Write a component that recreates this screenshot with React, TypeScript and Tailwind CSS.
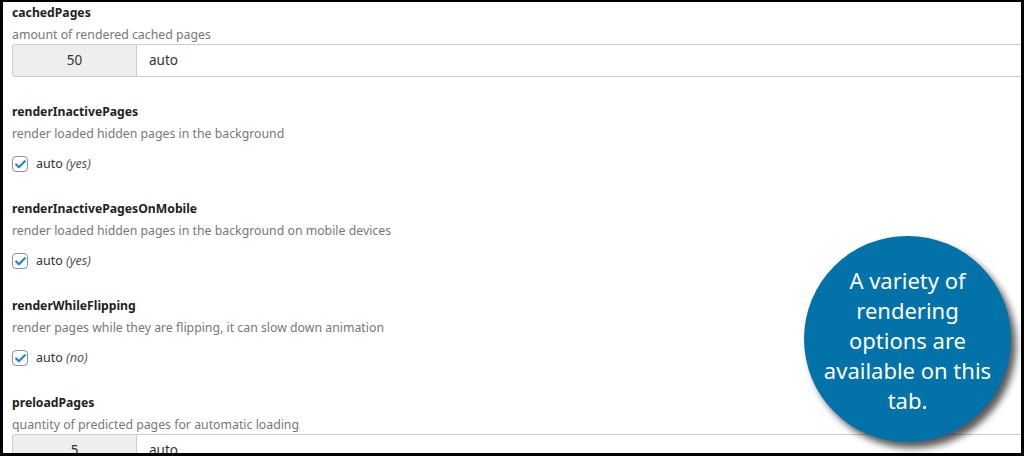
import { Check } from "lucide-react";

type Setting = {
  name: string;
  desc: string;
  kind: "number" | "check";
  value?: string;
  hint?: string;
};

const settings: Setting[] = [
  { name: "cachedPages", desc: "amount of rendered cached pages", kind: "number", value: "50" },
  { name: "renderInactivePages", desc: "render loaded hidden pages in the background", kind: "check", hint: "(yes)" },
  { name: "renderInactivePagesOnMobile", desc: "render loaded hidden pages in the background on mobile devices", kind: "check", hint: "(yes)" },
  { name: "renderWhileFlipping", desc: "render pages while they are flipping, it can slow down animation", kind: "check", hint: "(no)" },
  { name: "preloadPages", desc: "quantity of predicted pages for automatic loading", kind: "number", value: "5" },
];

function NumberField({ value }: { value: string }) {
  return (
    <div className="flex h-[33px] -mr-4">
      <div className="w-[125px] flex items-center justify-center bg-[#eeeeee] border border-[#cccccc] rounded-l-[3px] text-[13.5px] text-[#333]">
        {value}
      </div>
      <div className="flex-1 flex items-center pl-3 border-y border-[#cccccc] bg-white text-[13.5px] text-[#333]">
        auto
      </div>
    </div>
  );
}

function CheckField({ hint }: { hint: string }) {
  return (
    <div className="flex items-center h-5 mt-[11px]">
      <span className="w-4 h-4 rounded-[4px] border border-[#8c8f94] bg-white flex items-center justify-center">
        <Check className="w-[13px] h-[13px] text-[#1e8cbe]" strokeWidth={4} />
      </span>
      <span className="ml-2 text-[12.5px] text-[#333]">
        auto <i className="text-[#555]">{hint}</i>
      </span>
    </div>
  );
}

export default function App() {
  return (
    <div
      className="relative w-[1024px] h-[456px] overflow-hidden bg-white border-l-[3px] border-t-2 border-r-[3px] border-b-[3px] border-black"
      style={{ fontFamily: '"Noto Sans", "Open Sans", sans-serif' }}
    >
      <div className="pl-[9px] pt-[2px] flex flex-col gap-[26px]">
        {settings.map((s) => (
          <div key={s.name} className="flex flex-col">
            <div className="text-[12.2px] leading-[18px] font-bold text-[#222]">{s.name}</div>
            <div className="mt-[4px] text-[12.3px] leading-[18px] text-[#777]">{s.desc}</div>
            {s.kind === "number" ? <NumberField value={s.value!} /> : <CheckField hint={s.hint!} />}
          </div>
        ))}
      </div>

      {/* callout bubble */}
      <div className="absolute left-[801px] top-[234px] w-[207px] h-[206px] rounded-full bg-[#0272a9] shadow-[5px_6px_7px_rgba(0,0,0,0.65)] flex flex-col items-center justify-center text-white text-[22px] leading-[30px] text-center pt-[2px]">
        <span>A variety of</span>
        <span>rendering</span>
        <span>options are</span>
        <span>available on this</span>
        <span>tab.</span>
      </div>
    </div>
  );
}
